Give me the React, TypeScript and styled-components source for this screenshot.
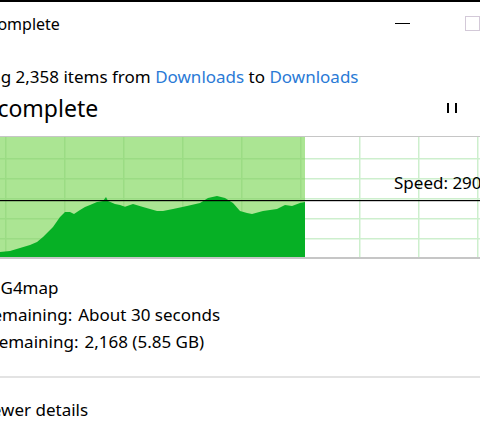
import styled, { createGlobalStyle } from "styled-components";

// the dialog is cut off on the left, the graph is drawn in page pixels shifted by OX
const OX = 54;
const OY = 137;

const curve: [number, number][] = [
  [-54, 256], [-30, 255], [-10, 253], [0, 252], [10, 251], [20, 248], [30, 245],
  [37, 242], [43, 237], [53, 227], [60, 217], [65, 212], [70, 212], [74, 214],
  [80, 210], [85, 207], [90, 205], [97, 202], [103, 201], [106, 197], [108, 201],
  [115, 204], [120, 205], [125, 206.7], [133, 204], [143, 207], [157, 211],
  [163, 211], [173, 209], [187, 206], [200, 203], [208, 198], [217, 196],
  [225, 198], [233, 203], [240, 211], [247, 213], [252, 214], [263, 211],
  [277, 209], [285, 205], [292, 206], [300, 203], [305, 202],
];

const GlobalStyle = createGlobalStyle`
  html, body {
    margin: 0;
    padding: 0;
    background: #ffffff;
  }
  body {
    font-family: "Noto Sans", "Open Sans", sans-serif;
    color: #000000;
  }
`;

const App = () => {
  const line = curve.map(([x, y]) => `${x + OX},${y - OY}`).join(" L");
  const area = `M0,120 L${line} L${305 + OX},120 Z`;
  const cols = Array.from({ length: 11 }, (_, i) => i * 59);
  const rows = [21, 41, 61, 81, 101];
  const filled = 305 + OX;

  return (
    <>
      <GlobalStyle />
      <Screen>
        <Window>
          <TitleBar>
            <Title>45% complete</Title>
            <CaptionButton>
              <MinimizeGlyph />
            </CaptionButton>
            <CaptionButton>
              <MaximizeGlyph />
            </CaptionButton>
            <CaptionButton />
          </TitleBar>

          <Content>
            <Summary>
              Copying 2,358 items from <Link>Downloads</Link> to{" "}
              <Link>Downloads</Link>
            </Summary>

            <HeadRow>
              <Headline>45% complete</Headline>
              <Controls>
                <ControlButton aria-label="Pause">
                  <PauseGlyph />
                </ControlButton>
                <ControlButton aria-label="Cancel">
                  <svg width="10" height="10" viewBox="0 0 10 10">
                    <path d="M0 0 L10 10 M10 0 L0 10" stroke="#000" strokeWidth="1.2" />
                  </svg>
                </ControlButton>
              </Controls>
            </HeadRow>

            <Graph>
              <svg width="100%" height="120" viewBox="0 0 619 120" preserveAspectRatio="xMinYMin slice">
                <rect x="0" y="0" width="619" height="120" fill="#ffffff" />
                {cols.map((x) => (
                  <rect key={`c${x}`} x={x} y="0" width="1.5" height="120" fill="#cdefcd" />
                ))}
                {rows.map((y) => (
                  <rect key={`r${y}`} x="0" y={y} width="619" height="1.5" fill="#cdefcd" />
                ))}
                <rect x="0" y="0" width={filled} height="120" fill="#abe593" />
                {cols
                  .filter((x) => x < filled)
                  .map((x) => (
                    <rect key={`d${x}`} x={x} y="0" width="1.5" height="120" fill="#9bdc84" />
                  ))}
                {rows.map((y) => (
                  <rect key={`e${y}`} x="0" y={y} width={filled} height="1.5" fill="#9bdc84" />
                ))}
                <path d={area} fill="#06b025" />
                <rect x="0" y={200 - OY} width="619" height="1.2" fill="#000000" />
              </svg>
              <SpeedLabel>Speed: 290 MB/s</SpeedLabel>
            </Graph>

            <Details>
              <DetailRow>
                <Label>Name:</Label>
                <Value>G4map</Value>
              </DetailRow>
              <DetailRow>
                <Label>Time remaining:</Label>
                <Value>About 30 seconds</Value>
              </DetailRow>
              <DetailRow>
                <Label>Items remaining:</Label>
                <Value>2,168 (5.85 GB)</Value>
              </DetailRow>
            </Details>
          </Content>

          <Divider />

          <Footer>
            <Toggle>Fewer details</Toggle>
          </Footer>
        </Window>
      </Screen>
    </>
  );
};

export default App;

const Screen = styled.div`
  width: 480px;
  height: 443px;
  overflow: hidden;
  box-sizing: border-box;
  border-top: 2px solid #000000;
  background: #ffffff;
`;

const Window = styled.div`
  width: 643px;
  margin-left: -66px;
  display: flex;
  flex-direction: column;
`;

const TitleBar = styled.div`
  height: 42px;
  display: flex;
  align-items: center;
`;

const Title = styled.div`
  flex: 1;
  padding-left: 20px;
  padding-top: 2px;
  font-size: 16px;
  line-height: 20px;
  white-space: nowrap;
`;

const CaptionButton = styled.div`
  width: 70px;
  height: 42px;
  display: flex;
  align-items: center;
  justify-content: center;
`;

const MinimizeGlyph = styled.span`
  width: 15px;
  height: 1px;
  background: #000000;
`;

const MaximizeGlyph = styled.span`
  width: 15px;
  height: 15px;
  box-sizing: border-box;
  border: 1px solid #d3c9d8;
`;

const Content = styled.div`
  padding: 0 12px;
  display: flex;
  flex-direction: column;
`;

const Summary = styled.div`
  margin-top: 22px;
  font-size: 17px;
  line-height: 22px;
  white-space: nowrap;
`;

const Link = styled.span`
  color: #2a7ad6;
`;

const HeadRow = styled.div`
  margin-top: 5px;
  display: flex;
  align-items: center;
  justify-content: space-between;
`;

const Headline = styled.div`
  font-size: 23px;
  line-height: 30px;
  white-space: nowrap;
`;

const Controls = styled.div`
  display: flex;
  margin-right: 53px;
`;

const ControlButton = styled.div`
  width: 40px;
  height: 30px;
  display: flex;
  align-items: center;
  justify-content: center;
`;

const PauseGlyph = styled.span`
  width: 10px;
  height: 10px;
  box-sizing: border-box;
  border-left: 2px solid #000000;
  border-right: 2px solid #000000;
`;

const Graph = styled.div`
  position: relative;
  margin-top: 13px;
  height: 120px;
  border-top: 1px solid #c6c6c6;
  border-bottom: 2px solid #c6c6c6;
  svg {
    display: block;
  }
`;

const SpeedLabel = styled.div`
  position: absolute;
  left: 448px;
  top: 36px;
  font-size: 17px;
  line-height: 20px;
  white-space: nowrap;
`;

const Details = styled.div`
  margin-top: 15px;
  margin-left: -4px;
  display: flex;
  flex-direction: column;
`;

const DetailRow = styled.div`
  display: flex;
  gap: 6px;
  font-size: 17px;
  line-height: 27px;
  white-space: nowrap;
`;

const Label = styled.span``;

const Value = styled.span``;

const Divider = styled.div`
  margin-top: 21px;
  height: 2px;
  background: #e3e3e3;
`;

const Footer = styled.div`
  padding: 21px 12px 0;
`;

const Toggle = styled.div`
  font-size: 17px;
  line-height: 22px;
  padding-left: 37px;
`;
